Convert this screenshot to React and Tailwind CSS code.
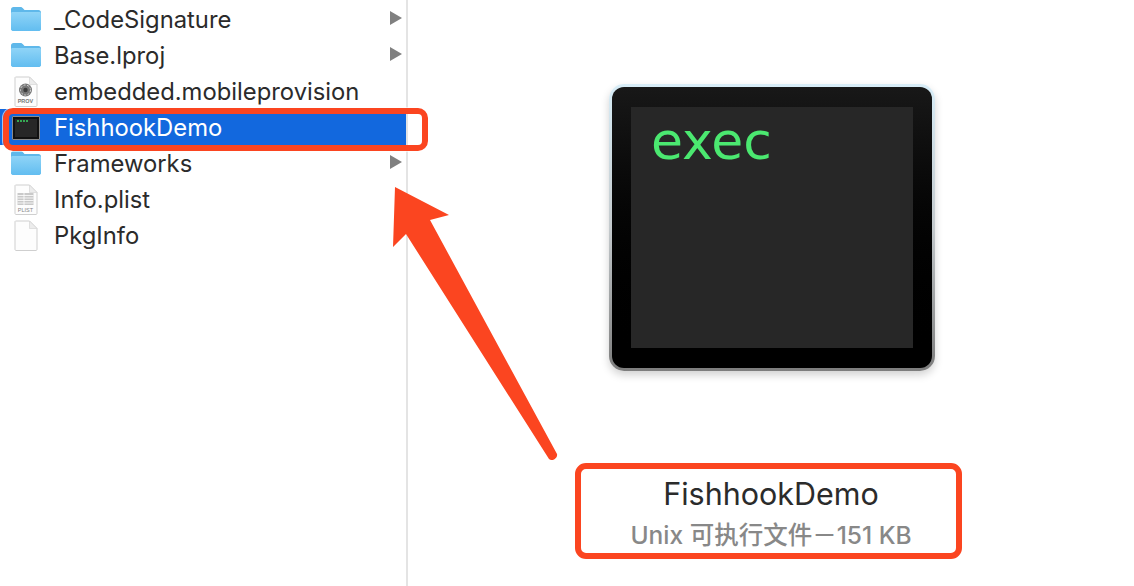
import React from 'react';

const Folder = () => (
  <svg width="32" height="26" viewBox="0 0 32 26">
    <defs>
      <linearGradient id="fold" x1="0" y1="0" x2="0" y2="1">
        <stop offset="0" stopColor="#8fd4f7" />
        <stop offset="1" stopColor="#62bdf0" />
      </linearGradient>
    </defs>
    <path d="M1 3.500C1 2 2 1 3.500 1h7c1 0 1.600.4 2.200 1.100L14.500 4H28.500C30 4 31 5 31 6.500V22.500C31 24 30 25 28.500 25H3.500C2 25 1 24 1 22.500Z" fill="#5fb8ea" />
    <path d="M1 7.500C1 6.500 1.700 6 2.500 6H29.500C30.300 6 31 6.500 31 7.500V22.500C31 24 30 25 28.500 25H3.500C2 25 1 24 1 22.500Z" fill="url(#fold)" />
  </svg>
);

const Page = ({ children }) => (
  <svg width="24" height="31" viewBox="0 0 24 31">
    <path d="M1.500 1H15.500L23 8.500V29.500C23 30 22.500 30.500 22 30.500H2C1.500 30.500 1 30 1 29.500V1.500Z" fill="#fdfdfd" stroke="#cfcfcf" />
    <path d="M15.500 1V8.500H23Z" fill="#ececec" stroke="#d5d5d5" strokeWidth="0.700" />
    {children}
  </svg>
);

const ProvIcon = () => (
  <Page>
    <circle cx="11.500" cy="14" r="6.500" fill="#777" />
    <circle cx="11.500" cy="14" r="5" fill="none" stroke="#d8d8d8" strokeWidth="1" strokeDasharray="2 1.500" />
    <circle cx="11.500" cy="14" r="2.200" fill="#3c3c3c" />
    <text x="11.500" y="27" textAnchor="middle" fontSize="5.500" fontWeight="700" fontFamily="Liberation Sans, sans-serif" fill="#777">PROV</text>
  </Page>
);

const PlistIcon = () => (
  <Page>
    <rect x="3.500" y="9" width="16" height="12" fill="#c9c9c9" />
    <path d="M3.500 11.500h16M3.500 14h16M3.500 16.500h16M3.500 19h16M10 9v12" stroke="#fff" strokeWidth="0.800" />
    <text x="11.500" y="27.500" textAnchor="middle" fontSize="5.500" fontFamily="Liberation Sans, sans-serif" fill="#888">PLIST</text>
  </Page>
);

const ExecThumb = () => (
  <div className="w-[28px] h-[24px] bg-[#111111] border border-[#8a8a8a] rounded-[1px] px-[2px] py-[2px] mt-[1px]">
    <div className="w-full h-full bg-[#272727] flex gap-[1px] px-[2px] py-[1px] items-start">
      <span className="w-[2px] h-[2px] bg-[#35a853]" />
      <span className="w-[2px] h-[2px] bg-[#35a853]" />
      <span className="w-[2px] h-[2px] bg-[#35a853]" />
      <span className="w-[2px] h-[2px] bg-[#35a853]" />
    </div>
  </div>
);

const files = [
  { name: '_CodeSignature', icon: <Folder />, more: true },
  { name: 'Base.lproj', icon: <Folder />, more: true },
  { name: 'embedded.mobileprovision', icon: <ProvIcon /> },
  { name: 'FishhookDemo', icon: <ExecThumb />, active: true },
  { name: 'Frameworks', icon: <Folder />, more: true },
  { name: 'Info.plist', icon: <PlistIcon /> },
  { name: 'PkgInfo', icon: <Page /> },
];

const FileRow = ({ file }) => (
  <div className={`h-[36px] flex items-center pl-[10px] pr-[4px] ${file.active ? 'bg-[#1268de] text-white' : 'text-[#2b2b2b]'}`}>
    <div className="w-[32px] flex justify-center shrink-0">{file.icon}</div>
    <span className="ml-[12px] mt-[2px] flex-1 text-[23.800px] leading-none">{file.name}</span>
    {file.more && (
      <svg width="12" height="14" viewBox="0 0 12 14" className="mb-[2px]">
        <path d="M0 0L12 7L0 14Z" fill="#808080" />
      </svg>
    )}
  </div>
);

export default function App() {
  return (
    <div className="relative w-[1134px] h-[586px] overflow-hidden bg-white flex font-['Inter','Noto_Sans_CJK_SC',sans-serif]">
      <div className="w-[408px] shrink-0 h-full border-r-2 border-[#e4e4e4] pt-[1px]">
        {files.map((f) => (
          <FileRow key={f.name} file={f} />
        ))}
      </div>

      <div className="flex-1 flex flex-col items-center pt-[84px]">
        <div className="ml-[2px] w-[326px] h-[287px] p-[3px] rounded-[15px] bg-gradient-to-b from-[#d8edf7] via-[#c4cacd] to-[#7d7d7d] shadow-[0_4px_8px_rgba(0,0,0,0.18)]">
          <div className="w-full h-full rounded-[12px] bg-gradient-to-b from-[#181818] to-[#000000] pt-[20px] px-[19px]">
            <div className="h-[241px] bg-[#272727] pl-[20px]">
              <span className="block text-[#4be870] text-[52px] leading-[68px] font-['DejaVu_Sans',sans-serif]">exec</span>
            </div>
          </div>
        </div>

        <div className="mt-[103px] text-[#2b2b2b] text-[30.500px] leading-[40px]">FishhookDemo</div>
        <div className="mt-[5px] text-[#888888] text-[24.500px] leading-[32px] font-medium">Unix 可执行文件－151 KB</div>
      </div>

      {/* annotations drawn on top */}
      <div className="absolute left-[3px] top-[108px] w-[425px] h-[43px] border-[6px] border-[#fb4520] rounded-[10px] shadow-[0_0_0_1px_rgba(255,255,255,0.6)]" />
      <div className="absolute left-[575px] top-[463px] w-[387px] h-[96px] border-[6px] border-[#fb4520] rounded-[11px]" />
      <svg className="absolute left-0 top-0" width="1134" height="586" viewBox="0 0 1134 586">
        <path d="M395 187L449 215L430 220L557 454C558 458 552 462 549 459L406 234L393 247Z" fill="#fb4520" />
      </svg>
    </div>
  );
}
